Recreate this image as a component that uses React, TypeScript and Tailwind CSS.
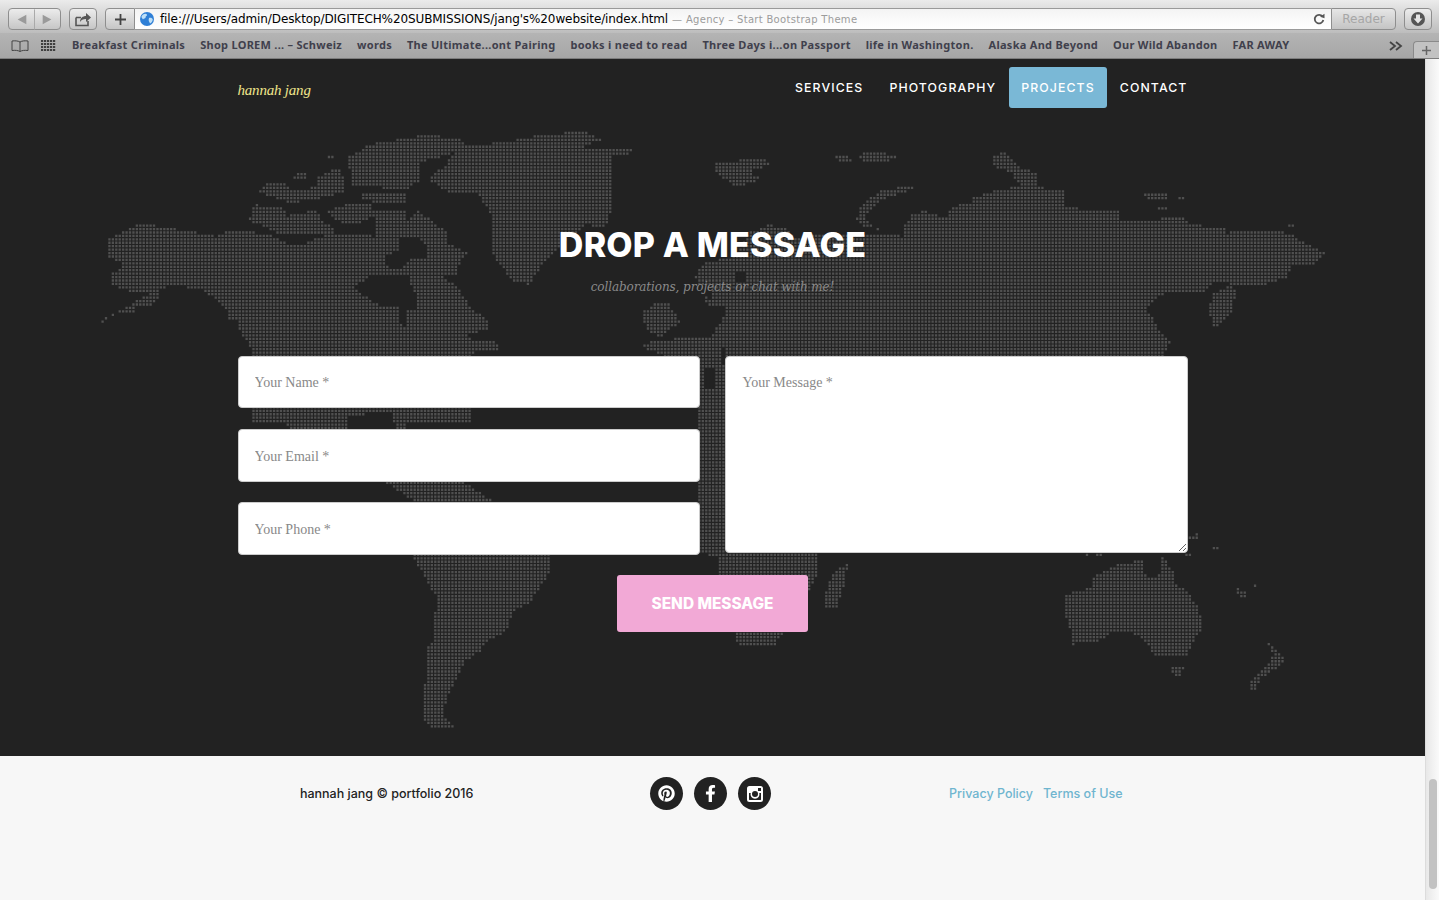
import React, { useMemo } from "react";
import { FaPinterest, FaFacebookF } from "react-icons/fa";

type P = [number, number];
const z5 = (a: number[]): P[] => { const o: P[] = []; for (let i = 0; i < a.length; i += 2) o.push([90 + a[i] / 2.45, 120 + a[i + 1] / 3]); return o; };
const z6 = (a: number[]): P[] => { const o: P[] = []; for (let i = 0; i < a.length; i += 2) o.push([700 + a[i] / 2.45, 120 + a[i + 1] / 3]); return o; };
const z8 = (a: number[]): P[] => { const o: P[] = []; for (let i = 0; i < a.length; i += 2) o.push([1030 + a[i] / 3, 520 + a[i + 1] / 3]); return o; };
const pg = (a: number[]): P[] => { const o: P[] = []; for (let i = 0; i < a.length; i += 2) o.push([a[i], a[i + 1]]); return o; };

const LAND: P[][] = [
  z5([830,165,870,130,900,70,1010,65,1040,55,1110,40,1150,38,1175,26,1200,26,1225,40,1260,60,1180,75,1260,80,1330,85,1330,95,1280,105,1280,190,1270,300,1250,320,1210,310,1130,400,1100,440,1075,490,1030,480,985,400,985,330,975,260,940,215,880,215,830,180]),
  z5([630,110,680,70,830,40,920,60,880,100,805,125,805,175,780,205,640,195,640,160,630,140]),
  z5([555,165,610,140,625,210,550,235,490,245,440,225,410,215,435,185,475,185,495,210,555,195]),
  z5([660,220,775,220,775,245,660,240]),
  z5([495,180,500,155,525,150,525,170]),
  z5([580,100,592,100,592,115,580,115]),
  z5([385,300,400,250,470,260,480,285,555,265,565,300,600,320,590,340,460,340,410,310]),
  z5([580,270,620,250,685,250,685,290,650,310,600,300]),
  z5([40,405,45,350,100,320,125,305,160,315,215,325,268,335,305,345,340,325,440,340,480,365,520,370,560,345,640,340,700,345,690,270,770,265,775,300,800,270,870,330,875,365,925,395,900,430,900,460,860,460,905,510,930,560,975,600,975,620,910,650,1000,665,1000,690,940,690,930,720,930,900,390,900,390,680,365,630,360,590,340,600,335,570,280,510,205,490,140,520,110,540,70,570,25,605,30,590,65,575,105,575,110,555,150,550,165,530,165,510,90,510,45,485,50,460,80,430]),
  pg([250,356,282,408,288,428,360,470,385,482,415,502,412,555,423,575,437,600,434,610,431,630,431,640,425,650,425,680,421,690,421,715,431,728,455,728,442,715,445,700,450,690,455,680,463,660,480,650,485,640,505,630,513,610,530,600,547,575,550,555,545,530,495,502,465,482,405,428,405,408,470,356]),
  z6([-15,471,0,430,90,400,115,335,170,310,215,325,225,345,405,340,440,335,495,345,500,310,520,275,550,270,600,290,615,255,660,245,665,230,715,210,780,195,890,205,890,250,930,265,1020,265,1030,300,1120,295,1130,285,1180,285,1200,310,1280,320,1290,335,1340,325,1440,335,1470,360,1530,395,1500,430,1445,430,1440,465,1380,490,1300,490,1260,480,1230,510,1190,510,1130,520,1090,560,1110,600,1130,640,1150,660,1130,705,1130,1300,60,1300,60,560,20,560]),
  z6([380,290,395,245,440,210,515,190,520,205,470,225,430,245,405,280,405,300,450,335,430,325,385,310]),
  z6([1250,590,1245,570,1250,520,1300,490,1310,510,1300,570,1260,625]),
  z6([30,125,90,125,90,110,145,110,175,125,160,135,120,150,145,175,130,185,85,195,55,170,30,145]),
  z6([315,100,350,100,370,120,355,128,335,118]),
  z6([380,105,405,90,435,90,485,110,435,128,410,128]),
  z6([715,105,740,90,760,110,785,140,825,155,825,190,780,190,755,150,720,140]),
  z6([1085,215,1145,210,1145,240,1090,240]),
  z6([1160,225,1200,235,1175,240]),
  z6([1110,252,1140,252,1140,270,1120,270]),
  z6([1435,305,1465,305,1445,320]),
  pg([655,338,640,345,665,356,695,358,695,550,717,557,717,573,728,610,736,643,775,643,795,610,808,590,817,573,817,557,720,360,730,300,710,337]),
  z5([1350,575,1385,545,1415,550,1445,600,1420,625,1400,650,1370,635,1350,600]),
  pg([697,370,725,370,725,553,697,553]),
  pg([817,557,800,300,760,300,720,553]),
  pg([847,560,845,575,840,595,835,607,825,607,825,590,830,575]),
  z8([100,275,105,225,125,210,185,200,185,165,230,145,270,125,335,120,335,160,380,175,392,105,425,150,435,185,470,215,500,260,510,290,510,330,480,370,470,400,370,400,330,350,300,335,240,335,205,360,125,370,115,355,125,340,115,320,105,285]),
  z8([420,435,460,435,450,470,430,470]),
  z8([710,365,740,395,765,405,750,430,740,440,690,470,670,510,645,500,680,460,700,435,720,420,725,400,715,380]),
  z8([612,200,625,200,625,212,650,210,645,230,625,230]),
  z8([664,190,674,190,674,198,664,198]),
  z8([470,45,500,38,500,58,470,58]),
  z8([543,78,562,78,562,88,543,88]),
  z8([462,98,482,98,482,108,462,108]),
  z8([165,98,176,98,176,108,165,108]),
  z8([196,98,216,98,216,108,196,108]),
];
const HOLES: P[][] = [
  z5([640,500,690,460,740,465,775,465,800,540,800,560,770,570,775,620,750,600,755,560,700,550]),
  z5([760,345,795,350,825,370,825,410,780,415,765,440,730,440,715,410,750,390]),
  z6([88,450,110,448,112,470,100,488,88,480]),
  z6([0,490,30,495,22,530,0,520]),
  pg([348,415,390,410,395,428,348,428]),
  pg([705,366,715,366,715,388,705,388]),
];

const inside = (x: number, y: number, poly: P[]) => {
  let c = false;
  for (let i = 0, j = poly.length - 1; i < poly.length; j = i++) {
    const [xi, yi] = poly[i];
    const [xj, yj] = poly[j];
    if (yi > y !== yj > y && x < ((xj - xi) * (y - yi)) / (yj - yi) + xi) c = !c;
  }
  return c;
};

function WorldMap() {
  const d = useMemo(() => {
    const out: string[] = [];
    const pitch = 3.43;
    for (let y = 125; y < 735; y += pitch) {
      for (let x = 98; x < 1330; x += pitch) {
        if (LAND.some((p) => inside(x, y, p)) && !HOLES.some((p) => inside(x, y, p))) {
          out.push(`M${x.toFixed(2)} ${y.toFixed(2)}h2.3v2.3h-2.3z`);
        }
      }
    }
    return out.join("");
  }, []);
  return (
    <svg className="absolute left-0 top-[-59px] pointer-events-none" width="1425" height="815" viewBox="0 0 1425 815">
      <path d={d} fill="#505050" />
    </svg>
  );
}

const UI = { fontFamily: '"DejaVu Sans", sans-serif' };
const HEAD = { fontFamily: 'Inter, "Liberation Sans", sans-serif' };
const SERIF = { fontFamily: '"DejaVu Serif", "Liberation Serif", serif' };
const PLACE = { fontFamily: '"Liberation Serif", serif' };

const BOOKMARKS = [
  "Breakfast Criminals",
  "Shop LOREM ... – Schweiz",
  "words",
  "The Ultimate...ont Pairing",
  "books i need to read",
  "Three Days i...on Passport",
  "life in Washington.",
  "Alaska And Beyond",
  "Our Wild Abandon",
  "FAR AWAY",
];

const btn = "border border-[#8e8e8e] bg-gradient-to-b from-[#ececec] to-[#c6c6c6] flex items-center justify-center";

function Toolbar() {
  return (
    <div className="h-[59px] shrink-0 flex flex-col border-b border-[#7d7d7d]" style={UI}>
      <div className="h-[33px] bg-gradient-to-b from-[#ebebeb] to-[#bdbdbd] flex items-center pl-2 pr-[7px] pt-[5px]">
        <div className={`${btn} w-[53px] h-[22px] rounded-[4px]`}>
          <svg width="53" height="21" viewBox="0 0 53 21">
            <path d="M18 5.5v10l-9-5z" fill="#9a9a9a" />
            <path d="M26.5 0v21" stroke="#a8a8a8" />
            <path d="M35 5.5v10l9-5z" fill="#9a9a9a" />
          </svg>
        </div>
        <div className={`${btn} w-[28px] h-[22px] rounded-[4px] ml-2`}>
          <svg width="18" height="15" viewBox="0 0 18 15">
            <path d="M2 5.5h5M2 5.5v8h12V9" fill="none" stroke="#555" strokeWidth="1.6" />
            <path d="M6 10c0-4 3-6 6-6V1l5 4.5L12 10V7C9 7 7 8 6 10z" fill="#555" />
          </svg>
        </div>
        <div className="ml-2 flex-1 flex h-[22px]">
          <div className="w-[30px] border border-[#8e8e8e] rounded-l-[4px] bg-gradient-to-b from-[#ececec] to-[#c6c6c6] flex items-center justify-center">
            <svg width="11" height="11" viewBox="0 0 11 11"><path d="M5.5 0v11M0 5.5h11" stroke="#444" strokeWidth="1.8" /></svg>
          </div>
          <div className="flex-1 min-w-0 border-y border-[#9a9a9a] bg-gradient-to-b from-[#f4f4f4] to-white flex items-center pl-[5px] pr-[5px] whitespace-nowrap overflow-hidden">
            <svg width="14" height="14" viewBox="0 0 14 14" className="shrink-0">
              <circle cx="7" cy="7" r="7" fill="#2f7fd6" />
              <path d="M3 2.5c2-1 3.5-.8 4 .3.4 1-1.6 1.4-1.4 2.6.2 1-2 .8-2.6 2-.5-.8-1.4-1.5-1.6-2.6.4-1 1-1.800 1.600-2.300zM9 6c1.500-.6 3.500 0 3.800 1.500-.3 2-1.300 3.500-2.800 4-.6-1.500-2-3-1-5.500z" fill="#bfe0f7" />
            </svg>
            <span className="ml-[6px] text-[12px] text-black tracking-[-0.1px]">file:///Users/admin/Desktop/DIGITECH%20SUBMISSIONS/jang's%20website/index.html</span>
            <span className="ml-[4px] text-[10px] text-[#9c9c9c] tracking-[0.3px]">— Agency – Start Bootstrap Theme</span>
            <svg width="12" height="12" viewBox="0 0 12 12" className="ml-auto mr-[1px] shrink-0">
              <path d="M9.500 3.500A4.300 4.300 0 1 0 10.300 7" fill="none" stroke="#555" strokeWidth="1.800" />
              <path d="M7 3.800 11.500 .8v4.500z" fill="#555" />
            </svg>
          </div>
          <div className="w-[65px] border border-[#8e8e8e] rounded-r-[4px] bg-gradient-to-b from-[#e6e6e6] to-[#c4c4c4] flex items-center justify-center text-[12px] text-[#a6a6a6]">Reader</div>
        </div>
        <div className={`${btn} w-[28px] h-[22px] rounded-[4px] ml-2`}>
          <svg width="14" height="14" viewBox="0 0 14 14">
            <circle cx="7" cy="7" r="7" fill="#555" />
            <path d="M5 2.500h4v4h2.500L7 11.500 2.500 6.500H5z" fill="#e6e6e6" />
          </svg>
        </div>
      </div>
      <div className="flex-1 min-h-0 bg-gradient-to-b from-[#b4b4b4] to-[#a6a6a6] flex items-center pl-[11px] text-[11px] relative">
        <svg width="18" height="12" viewBox="0 0 18 12" className="shrink-0">
          <path d="M9 2C7 .8 4 .6 1 1v9.500c3-.4 6-.2 8 1 2-1.200 5-1.400 8-1V1C14 .6 11 .8 9 2zM9 2v9.500" fill="none" stroke="#444" strokeWidth="1" />
        </svg>
        <svg width="15" height="12" viewBox="0 0 15 12" className="shrink-0 ml-[12px]">
          <path d="M0 1h15M0 4h15M0 7h15M0 10h15" stroke="#3f3f3f" strokeWidth="2" strokeDasharray="2.200 .8" />
        </svg>
        <div className="ml-[16px] flex gap-[15px] whitespace-nowrap font-bold text-[#40404c]" style={{ fontFamily: '"Noto Sans", sans-serif', letterSpacing: "0.28px" }}>
          {BOOKMARKS.map((b) => <span key={b}>{b}</span>)}
        </div>
        <svg width="14" height="10" viewBox="0 0 14 10" className="ml-auto mr-[10px] shrink-0">
          <path d="M1 1l5 4-5 4M7 1l5 4-5 4" fill="none" stroke="#444" strokeWidth="1.800" />
        </svg>
        <div className="w-[26px] h-[17px] self-end bg-[#c2c2c2] rounded-tl-[4px] border-l border-t border-[#8a8a8a] flex items-center justify-center mr-0">
          <svg width="9" height="9" viewBox="0 0 9 9"><path d="M4.500 0v9M0 4.500h9" stroke="#666" strokeWidth="1.500" /></svg>
        </div>
      </div>
    </div>
  );
}

function Nav() {
  const items = ["SERVICES", "PHOTOGRAPHY", "PROJECTS", "CONTACT"];
  return (
    <div className="w-[970px] mx-auto pt-2 flex items-start justify-between relative" style={HEAD}>
      <div className="pl-[10px] pt-[11px] text-[15px] italic leading-[24px] text-[#f0e68c] tracking-[-0.2px]" style={{ fontFamily: '"Liberation Serif", serif' }}>hannah jang</div>
      <div className="flex mr-[-3px]">
        {items.map((t) => (
          <a key={t} className={`h-[41px] flex items-center pt-[1px] text-[12.3px] font-medium tracking-[1.1px] rounded-[3px] text-white ${t === "PROJECTS" ? "bg-[#7ab8d6] px-[12px]" : "px-[13px]"}`}>{t}</a>
        ))}
      </div>
    </div>
  );
}

function Contact() {
  const inp = "w-full bg-white rounded-[4px] pl-[16px] pr-[17px] pt-[2px] text-[14px] outline-none border border-[#ccc] placeholder:text-[#888888]";
  return (
    <section className="relative h-[697px] shrink-0 bg-[#222222] overflow-hidden">
      <WorldMap />
      <div className="relative">
        <Nav />
        <h2 className="mt-[120px] text-center text-[34px] leading-[34px] font-extrabold text-white tracking-[0.2px]" style={HEAD}>DROP A MESSAGE</h2>
        <p className="mt-[15px] text-center text-[12px] leading-[20px] italic text-[#8a8a8a] tracking-[-0.1px]" style={SERIF}>collaborations, projects or chat with me!</p>
        <form className="w-[950px] mx-auto mt-[59px]">
          <div className="flex gap-[25px] items-start">
            <div className="w-[462px] flex flex-col" style={PLACE}>
              <input className={`${inp} h-[52px] mb-[21px]`} placeholder="Your Name *" readOnly />
              <input className={`${inp} h-[53px] mb-[20px]`} placeholder="Your Email *" readOnly />
              <input className={`${inp} h-[53px]`} placeholder="Your Phone *" readOnly />
            </div>
            <textarea className="w-[463px] h-[197px] bg-white rounded-[4px] px-[17px] pt-[18px] pb-[16px] text-[14px] leading-[16px] outline-none border border-[#ccc] placeholder:text-[#888888]" style={PLACE} placeholder="Your Message *" readOnly />
          </div>
          <div className="flex justify-center mt-[20px]">
            <button type="button" className="w-[191px] h-[57px] bg-[#f2a9d6] rounded-[3px] text-white text-[15.4px] font-extrabold" style={HEAD}>SEND MESSAGE</button>
          </div>
        </form>
      </div>
    </section>
  );
}

function Social({ children }: { children: React.ReactNode }) {
  return <a className="w-[33px] h-[33px] rounded-full bg-[#222222] flex items-center justify-center text-white text-[17px]">{children}</a>;
}

function Footer() {
  return (
    <footer className="flex-1 min-h-0 bg-[#f7f7f7] pt-[21px]" style={HEAD}>
      <div className="w-[970px] mx-auto grid grid-cols-3 items-center text-[12.5px]">
        <div className="text-center font-medium text-[#222222] pr-[5px] pt-[1px]">hannah jang © portfolio 2016</div>
        <div className="flex justify-center gap-[11px] pr-[3px]">
          <Social><FaPinterest /></Social>
          <Social><FaFacebookF /></Social>
          <Social>
            <svg width="16" height="16" viewBox="0 0 16 16">
              <path fillRule="evenodd" fill="#fff" d="M2.500 0h11A2.500 2.500 0 0 1 16 2.500v11a2.500 2.500 0 0 1-2.500 2.500h-11A2.500 2.500 0 0 1 0 13.500v-11A2.500 2.500 0 0 1 2.500 0zM11 2v3h3V2zM2 7v6.500c0 .3.200.5.500.500h11c.3 0 .5-.2.500-.5V7h-1.700a4.500 4.500 0 1 1-8.600 0zM8 5a3 3 0 1 0 0 6 3 3 0 0 0 0-6z" />
            </svg>
          </Social>
        </div>
        <div className="flex justify-center gap-[10px] font-medium text-[#6fb5cf] pt-[1px]">
          <a>Privacy Policy</a>
          <a>Terms of Use</a>
        </div>
      </div>
    </footer>
  );
}

export default function App() {
  return (
    <div className="h-[900px] w-[1439px] flex flex-col overflow-hidden">
      <Toolbar />
      <div className="flex-1 min-h-0 flex">
        <main className="w-[1425px] flex flex-col">
          <Contact />
          <Footer />
        </main>
        <aside className="w-[14px] bg-gradient-to-r from-[#e8e8e8] to-[#fafafa] border-l border-[#dcdcdc] flex flex-col pt-[720px] pl-[3px]">
          <div className="w-[8px] h-[110px] rounded-full bg-[#c2c2c2]" />
        </aside>
      </div>
    </div>
  );
}
